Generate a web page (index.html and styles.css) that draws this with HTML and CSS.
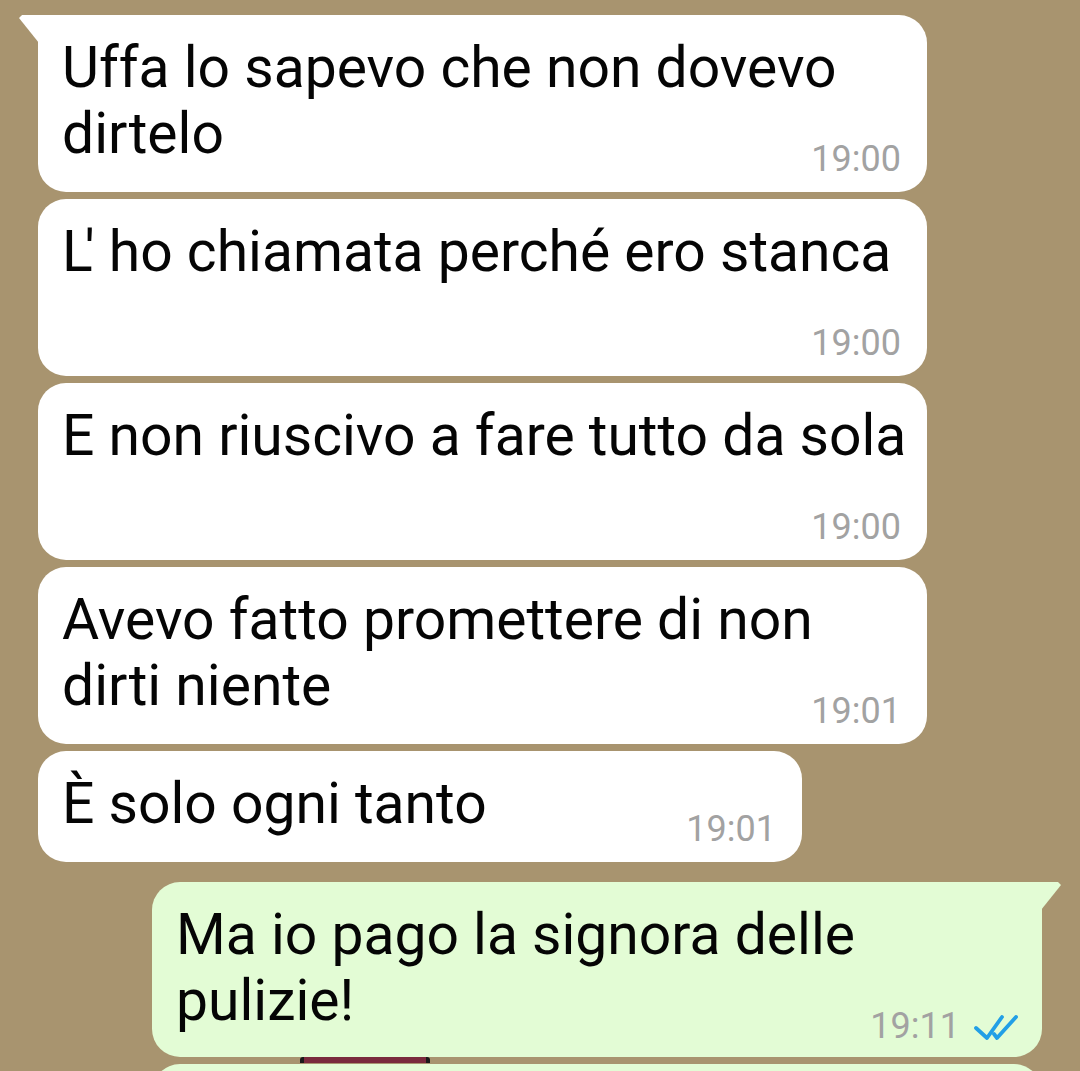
FILE: index.html
```html
<!DOCTYPE html>
<html lang="it">
<head>
    <meta charset="UTF-8">
    <meta name="viewport" content="width=device-width, initial-scale=1.0">
    <title>Chat</title>
    <link rel="stylesheet" href="styles.css">
</head>
<body>
    <div class="chat">
        <div class="bubble in first">
            <span class="text">Uffa lo sapevo che non dovevo<br>dirtelo</span>
            <span class="meta">19:00</span>
        </div>
        <div class="bubble in">
            <span class="text"><span class="kern">L</span>' ho chiamata perché ero stanca</span>
            <span class="meta">19:00</span>
        </div>
        <div class="bubble in">
            <span class="text">E non riuscivo a fare tutto da sola</span>
            <span class="meta">19:00</span>
        </div>
        <div class="bubble in">
            <span class="text">Avevo fatto promettere di non<br>dirti niente</span>
            <span class="meta">19:01</span>
        </div>
        <div class="bubble in short">
            <span class="text">È solo ogni tanto</span>
            <span class="meta">19:01</span>
        </div>

        <div class="bubble out first">
            <span class="text">Ma io pago la signora delle<br>pulizie!</span>
            <span class="meta">19:11<svg class="ticks" viewBox="0 0 44 26" width="44" height="26">
                    <path d="M2 13 L13 23 L28 2" />
                    <path d="M20 19 L23 23 L42 2" />
                </svg></span>
        </div>
        <div class="bubble out next">
            <div class="peek"></div>
        </div>
    </div>
</body>
</html>
```

FILE: styles.css
```css
* {
    margin: 0;
    padding: 0;
    box-sizing: border-box;
}
html, body {
    height: 100%;
    overflow: hidden;
}
body {
    background: #a8946f;
    font-family: Roboto, "Noto Sans", sans-serif;
    color: #050505;
}
.chat {
    display: flex;
    flex-direction: column;
    align-items: flex-start;
    gap: 7px;
    padding-top: 15px;
}
.bubble {
    position: relative;
    display: flow-root;
    width: 889px;
    margin-left: 38px;
    padding: 20px 24px 25px 24px;
    border-radius: 28px;
    background: #ffffff;
    font-size: 57px;
    line-height: 66px;
}
.bubble .text {
    white-space: nowrap;
}
.bubble .kern {
    letter-spacing: -8px;
}
.bubble .meta {
    float: right;
    height: 66px;
    padding-top: 47px;
    margin-left: 20px;
    margin-right: 2px;
    font-size: 36px;
    line-height: 22px;
    color: #a2a2a2;
    white-space: nowrap;
}
.bubble.short {
    width: 764px;
}
.bubble.in.first {
    border-top-left-radius: 0;
}
.bubble.in.first::before {
    content: "";
    position: absolute;
    top: 0;
    left: -19px;
    width: 20px;
    height: 28px;
    background: #ffffff;
    clip-path: polygon(3px 0, 100% 0, 100% 100%, 0 3px);
    border-top-left-radius: 3px;
}
.bubble.out {
    margin-left: 152px;
    margin-top: 13px;
    width: 890px;
    padding-bottom: 23px;
    background: #e3fcd5;
}
.bubble.out.first {
    border-top-right-radius: 0;
}
.bubble.out.first::before {
    content: "";
    position: absolute;
    top: 0;
    right: -19px;
    width: 20px;
    height: 28px;
    background: #e3fcd5;
    clip-path: polygon(0 0, calc(100% - 3px) 0, 100% 3px, 0 100%);
}
.bubble.out .meta {
    margin-right: 0;
}
.bubble.out.next {
    margin-top: 0;
    height: 120px;
}
.ticks {
    margin-left: 14px;
    vertical-align: -3px;
    fill: none;
    stroke: #229fe6;
    stroke-width: 3.8;
    stroke-linecap: round;
    stroke-linejoin: round;
}
.peek {
    position: absolute;
    top: -7px;
    left: 148px;
    width: 130px;
    height: 6px;
    background: #7a2b3d;
    border-left: 4px solid #1b1b1b;
    border-right: 4px solid #1b1b1b;
    border-radius: 3px 3px 0 0;
}
```
